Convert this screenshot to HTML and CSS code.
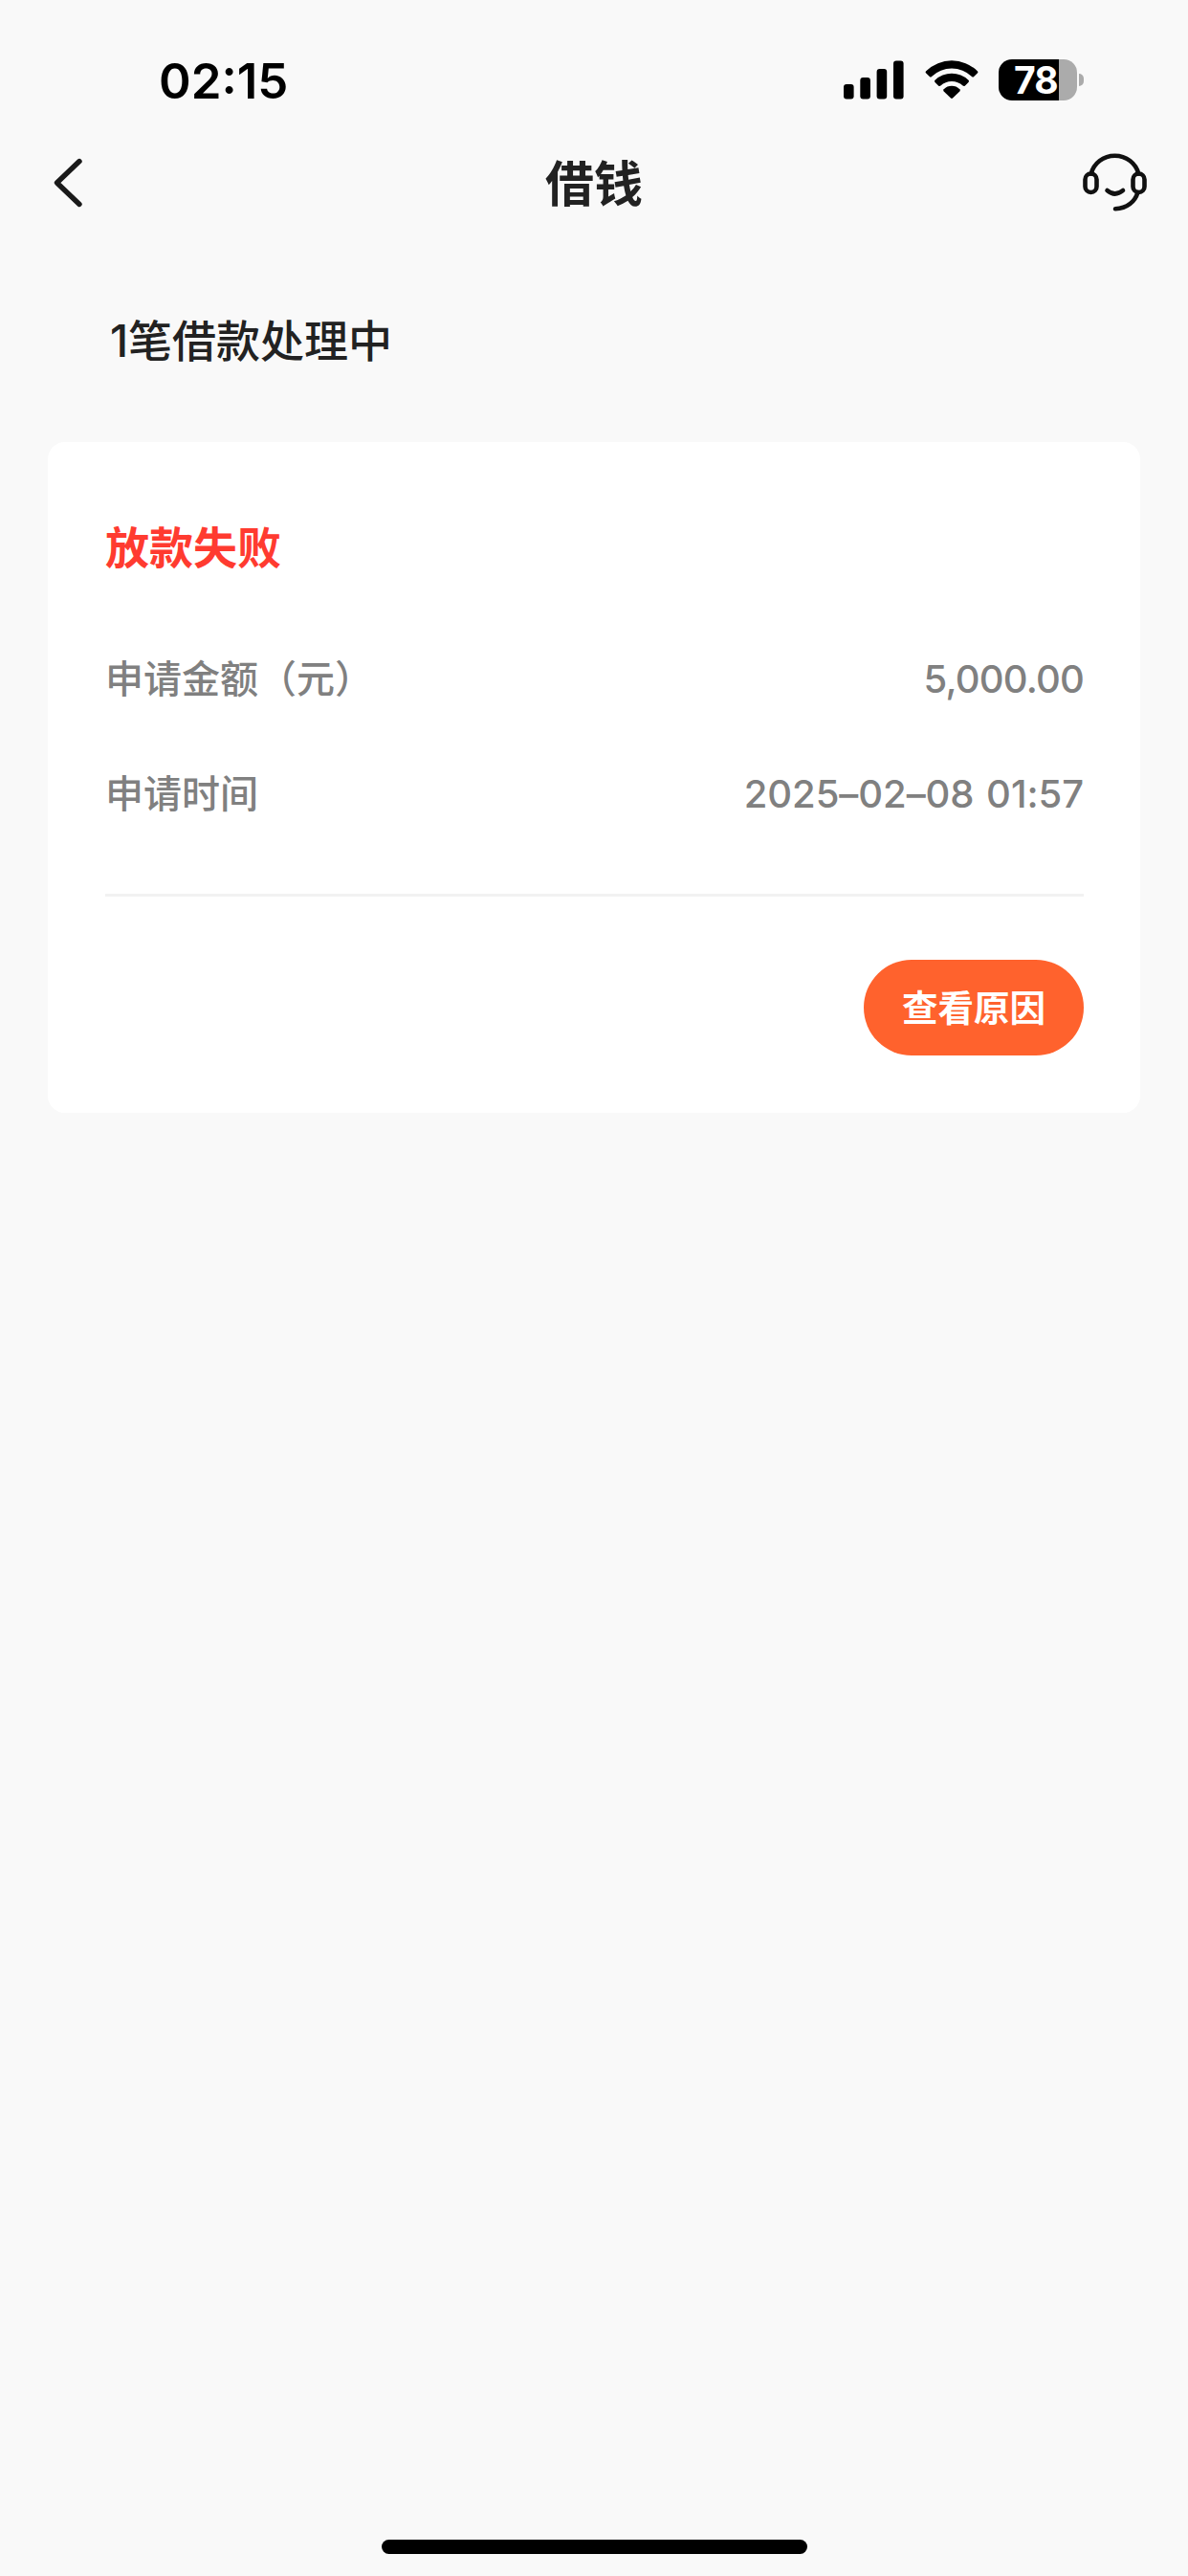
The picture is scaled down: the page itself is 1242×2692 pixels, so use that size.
FILE: index.html
```html
<!DOCTYPE html>
<html lang="zh-CN">
<head>
<meta charset="utf-8">
<title>借钱</title>
<link rel="stylesheet" href="styles.css">
</head>
<body>
<div class="screen">
  <header class="status">
    <span class="clock">02:15</span>
    <div class="indicators">
      <svg class="signal" viewBox="0 0 63 44" aria-hidden="true">
        <rect x="0" y="26" width="10.6" height="15.4" rx="3"/>
        <rect x="17.3" y="19" width="10.6" height="22.4" rx="3"/>
        <rect x="34.6" y="10" width="10.6" height="31.4" rx="3"/>
        <rect x="52" y="1.5" width="10.6" height="39.9" rx="3"/>
      </svg>
      <svg class="wifi" viewBox="0 0 56 44" aria-hidden="true">
        <path d="M1.2 12.2Q0 13.4 1.2 14.6L4.8 18Q5.8 19 7 18A30.5 30.5 0 0 1 49 18Q50.200 19 51.200 18L54.800 14.600Q56 13.400 54.800 12.200A38.500 38.500 0 0 0 1.200 12.200Z"/>
        <path d="M10.500 21.700Q9.300 22.800 10.500 24L14 27.400Q15.200 28.500 16.400 27.500A17 17 0 0 1 39.600 27.500Q40.800 28.500 42 27.400L45.500 24Q46.700 22.800 45.500 21.700A25.500 25.500 0 0 0 10.500 21.700Z"/>
        <path d="M19.700 31.200Q18.600 32.300 19.700 33.400L27 40.600Q28 41.500 29 40.600L36.300 33.400Q37.400 32.300 36.300 31.200A12 12 0 0 0 19.700 31.200Z"/>
      </svg>
      <div class="battery">
        <div class="cell"><span class="level">78</span></div>
        <i class="nub"></i>
      </div>
    </div>
  </header>
  <nav class="nav">
    <svg class="back" viewBox="0 0 34 56" aria-label="返回"><path d="M29 5.500L5.500 28L29 50.500"/></svg>
    <h1 class="title">借钱</h1>
    <svg class="service" viewBox="0 0 68 64" aria-label="客服">
      <rect x="2.500" y="22.500" width="12" height="19.500" rx="6"/>
      <rect x="52.500" y="22.500" width="12" height="19.500" rx="6"/>
      <path d="M8.700 22.500C11.500 11.500 21.500 3.700 33.500 3.700S55.500 11.500 58.300 22.500"/>
      <path d="M57.500 42C54.500 52 46 58.500 34 59.300"/>
      <path d="M25.500 40Q33.500 47 42 40"/>
    </svg>
  </nav>
  <main>
    <h2 class="summary">1笔借款处理中</h2>
    <section class="card">
      <h3 class="state">放款失败</h3>
      <dl class="details">
        <div class="row"><dt>申请金额（元）</dt><dd class="amount">5,000.00</dd></div>
        <div class="row"><dt>申请时间</dt><dd class="date">2025–02–08 01:57</dd></div>
      </dl>
      <div class="actions"><button class="reason" type="button">查看原因</button></div>
    </section>
  </main>
  <footer class="home"><i class="home-bar"></i></footer>
</div>
</body>
</html>
```
FILE: styles.css
```css
* {
  box-sizing: border-box;
}

body {
  margin: 0;
  background: #f9f9f9;
  color: #222;
  font-family: Inter, "Noto Sans CJK SC", sans-serif;
}

h1, h2, h3, dl, dd {
  margin: 0;
}

.screen {
  display: flex;
  flex-direction: column;
  width: 1242px;
  height: 2692px;
}

.status {
  display: flex;
  justify-content: space-between;
  height: 140px;
  padding: 55px 109px 0 166px;
}

.clock {
  height: 60px;
  line-height: 60px;
  font-size: 51px;
  font-weight: 600;
  color: #000;
}

.indicators {
  display: flex;
  align-items: flex-start;
  padding-top: 7px;
}

.signal {
  width: 63px;
  height: 44px;
  margin-right: 22px;
}

.wifi {
  width: 56px;
  height: 44px;
  margin-right: 21px;
}

.battery {
  display: flex;
  align-items: center;
  gap: 2px;
}

.cell {
  width: 82px;
  height: 43px;
  border-radius: 14px;
  background: linear-gradient(90deg, #000 63px, #ababab 63px);
}

.level {
  display: block;
  width: 82px;
  padding-left: 16px;
  line-height: 43px;
  font-size: 39px;
  font-weight: 700;
  letter-spacing: -1px;
  color: #fff;
}

.nub {
  width: 5px;
  height: 13px;
  border-radius: 0 6px 6px 0;
  background: #ababab;
}

.nav {
  display: flex;
  align-items: center;
  justify-content: space-between;
  height: 102px;
  padding: 0 42px 0 54px;
}

.back {
  width: 34px;
  height: 56px;
  fill: none;
  stroke: #1a1a1a;
  stroke-width: 5.4;
  stroke-linecap: round;
  stroke-linejoin: round;
}

.title {
  margin-left: 22px;
  padding-top: 4px;
  line-height: 76px;
  font-size: 51px;
  font-weight: 700;
}

.service {
  width: 68px;
  height: 64px;
  fill: none;
  stroke: #111;
  stroke-width: 4.6;
  stroke-linecap: round;
}

.summary {
  height: 220px;
  padding: 79px 0 0 115px;
  line-height: 70px;
  font-size: 46px;
  font-weight: 500;
}

.card {
  height: 701px;
  margin: 0 50px;
  padding: 75px 59px 0 60px;
  border-radius: 18px;
  background: #fff;
}

.state {
  line-height: 70px;
  font-size: 46px;
  font-weight: 700;
  color: #ff3b30;
}

.details {
  height: 330px;
  padding-top: 43px;
  border-bottom: 3px solid #f2f2f2;
}

.row {
  display: flex;
  justify-content: space-between;
  height: 120px;
  line-height: 120px;
  font-size: 40px;
  font-weight: 500;
  color: #808080;
}

.amount {
  letter-spacing: -0.8px;
}

.date {
  letter-spacing: -0.05px;
  word-spacing: 2px;
}

.actions {
  display: flex;
  justify-content: flex-end;
  padding-top: 66px;
}

.reason {
  width: 230px;
  height: 100px;
  padding: 2px 0 0;
  border: 0;
  border-radius: 50px;
  background: #ff622d;
  color: #fff;
  font: 700 37.5px/98px Inter, "Noto Sans CJK SC", sans-serif;
}

.home {
  display: flex;
  justify-content: center;
  margin-top: auto;
  padding-bottom: 23px;
}

.home-bar {
  width: 445px;
  height: 15px;
  border-radius: 8px;
  background: #000;
}
```
